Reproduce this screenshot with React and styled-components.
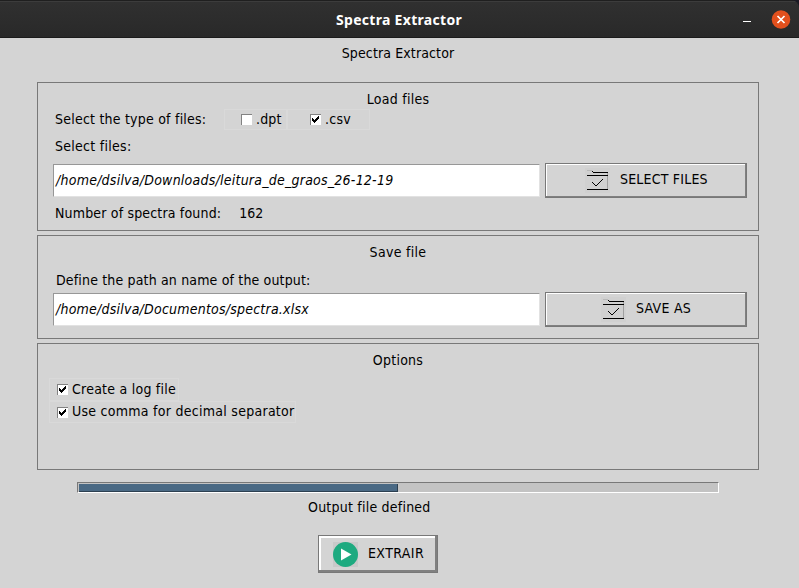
import React from "react";
import styled, { createGlobalStyle, css } from "styled-components";

const Global = createGlobalStyle`
  * { box-sizing: border-box; }
  body { margin: 0; background: #d4d4d4; }
`;
const Window = styled.div`
  width: 799px;
  height: 588px;
  overflow: hidden;
  background: #d4d4d4;
  color: #000;
  font: 14px/20px "DejaVu Sans Condensed", "DejaVu Sans", sans-serif;
  display: flex;
  flex-direction: column;
`;
const TitleBar = styled.header`
  height: 38px;
  flex: none;
  display: grid;
  grid-template-columns: 96px 1fr 96px;
  align-items: center;
  padding-top: 1px;
  background: linear-gradient(#1f1f1f 0 1px, #3c3c3c 1px 2px, #303030 2px, #292929 37px, #1b1b1b 37px);
  border-top-right-radius: 8px;
`;
const TitleCorner = styled.div`
  background: #1a1a24;
`;
const Title = styled.h1`
  grid-column: 2;
  margin: 0;
  padding-right: 1px;
  text-align: center;
  color: #fff;
  font: bold 14px/20px "Noto Sans", sans-serif;
`;
const WindowButtons = styled.div`
  display: flex;
  justify-content: flex-end;
  align-items: center;
  padding-right: 8px;
  gap: 20px;
`;
const Minimize = styled.i`
  width: 8px;
  height: 1px;
  background: #fff;
  margin-top: 4px;
`;
const Heading = styled.div`
  width: 722px;
  margin-left: 37px;
  padding-top: 5px;
  height: 44px;
  flex: none;
  text-align: center;
`;
const Panel = styled.section`
  width: 722px;
  height: ${(p) => p.$h}px;
  flex: none;
  margin: 0 0 ${(p) => p.$gap}px 37px;
  border: 1px solid #787878;
  padding: 6px 11px 0 15px;
`;
const PanelTitle = styled.h2`
  margin: 0 0 0 -4px;
  font: inherit;
  text-align: center;
`;
const Line = styled.div`
  display: flex;
  align-items: center;
  height: ${(p) => p.$h}px;
  padding-left: ${(p) => p.$indent || 0}px;
  gap: ${(p) => p.$gap || 0}px;
`;
const Text = styled.span`
  white-space: pre;
  letter-spacing: ${(p) => p.$track || 0}px;
`;
const RaisedText = styled(Text)`
  margin-bottom: 2px;
`;
const TypeLabel = styled(RaisedText)`
  width: 169px;
`;
const Check = styled.label`
  display: flex;
  align-items: center;
  gap: 4px;
  width: ${(p) => p.$w}px;
  height: ${(p) => p.$h}px;
  padding-left: ${(p) => p.$pad}px;
  border: 1px solid #d9d9d9;
`;
const Tick = styled.span`
  width: 11px;
  height: 11px;
  background: #fff;
  border: solid #828282;
  border-width: 1px 0 0 1px;
  display: flex;
`;
const Options = styled.div`
  margin: 8px 0 0 -4px;
`;
const FieldRow = styled.div`
  display: flex;
  align-items: center;
  gap: 5px;
  margin-top: ${(p) => p.$top}px;
`;
const Field = styled.div`
  width: 487px;
  height: 33px;
  padding: 5px 0 0 2px;
  background: #fff;
  border: 1px solid;
  border-color: #979797 #e2e2e2 #e2e2e2 #979797;
  font-style: italic;
`;
const raised = css`
  border: 1px solid #787878;
  box-shadow: inset -${(p) => p.$bevel}px -${(p) => p.$bevel}px #808080,
    inset ${(p) => p.$bevel}px ${(p) => p.$bevel}px #fff;
`;
const Button = styled.button`
  ${raised}
  width: ${(p) => p.$w}px;
  height: ${(p) => p.$h}px;
  padding: 0 0 0 ${(p) => p.$pad}px;
  display: flex;
  align-items: center;
  gap: 10px;
  background: #d4d4d4;
  color: #000;
  font: inherit;
`;
const ButtonText = styled(Text)`
  margin-bottom: ${(p) => p.$lift}px;
`;
const Track = styled.div`
  width: 642px;
  height: 11px;
  flex: none;
  margin: 12px 0 0 77px;
  background: #c3c3c3;
  border: 1px solid;
  border-color: #787878 #fff #fff #787878;
  padding: 1px 0 0 1px;
  display: flex;
`;
const Bar = styled.div`
  background: #4a6984;
  border: solid #2c3f50;
  border-width: 0 1px 1px 0;
`;
const Footer = styled.footer`
  display: flex;
  flex-direction: column;
  padding: 4px 0 0 308px;
`;
const ActionRow = styled.div`
  padding: 18px 0 0 10px;
`;

function CheckBox({ checked, label, track, ...size }) {
  return (
    <Check {...size}>
      <Tick>
        {checked && (
          <svg width="10" height="10" viewBox="0 0 10 10" shapeRendering="crispEdges">
            <path d="M1 3h1v1h1v1h1v-1h1v-1h1v-1h1v-1h1v3h-1v1h-1v1h-1v1h-1v1h-1v-1h-1v-1h-1z" />
          </svg>
        )}
      </Tick>
      <RaisedText $track={track}>{label}</RaisedText>
    </Check>
  );
}

function FolderIcon() {
  return (
    <svg width="25" height="25" viewBox="0 0 25 25" shapeRendering="crispEdges">
      <path fill="#d0d0d0" d="M0 0h25v25H0z" />
      <path fill="#b8b8b8" d="M2 2h5v1H2z" />
      <path fill="#a0a0a0" d="M22 5h1v16h-1z" />
      <path d="M7 3h1v1h15v1H8v-1H7zM2 7h21v1H2zM2 21h21v1H2z" />
      <path d="M7 14h1v1H7zM8 15h1v1H8zM9 16h1v1H9zM10 17h2v1h-2zM12 16h1v1h-1zM13 15h1v1h-1zM14 14h1v1h-1zM15 13h1v1h-1zM16 12h1v1h-1zM17 11h1v1h-1z" />
    </svg>
  );
}

function PlayIcon() {
  return (
    <svg width="25" height="25" viewBox="0 0 25 25">
      <path fill="#c9c9c9" d="M0 0h25v25H0z" />
      <circle cx="12.5" cy="12.5" r="12.5" fill="#1eaa80" />
      <path fill="#fff" d="M8 6.5v12l10.5-6z" />
    </svg>
  );
}

export default function App() {
  return (
    <Window>
      <Global />
      <TitleCorner>
        <TitleBar>
          <Title><Text $track={0.3}>Spectra Extractor</Text></Title>
          <WindowButtons>
            <Minimize />
            <svg width="20" height="20" viewBox="0 0 20 20">
              <circle cx="10" cy="9.5" r="9.3" fill="#e2501d" />
              <path d="M6.5 6l7 7m0-7l-7 7" stroke="#fff" strokeWidth="1.7" />
            </svg>
          </WindowButtons>
        </TitleBar>
      </TitleCorner>
      <Heading><Text $track={0.12}>Spectra Extractor</Text></Heading>

      <Panel $h={149} $gap={4}>
        <PanelTitle><Text $track={0.27}>Load files</Text></PanelTitle>
        <Line $h={21} $indent={2}>
          <TypeLabel $track={0.22}>Select the type of files:</TypeLabel>
          <CheckBox label=".dpt" track={0.15} $w={63} $h={21} $pad={16} />
          <CheckBox checked label=".csv" track={0.25} $w={83} $h={21} $pad={22} />
        </Line>
        <Line $h={33} $indent={2}><RaisedText $track={0.28}>Select files:</RaisedText></Line>
        <FieldRow $top={0}>
          <Field><Text $track={0.235}>/home/dsilva/Downloads/leitura_de_graos_26-12-19</Text></Field>
          <Button $w={202} $h={35} $bevel={1} $pad={39}>
            <FolderIcon />
            <ButtonText $track={0.2} $lift={3}>SELECT FILES</ButtonText>
          </Button>
        </FieldRow>
        <Line $h={30} $indent={2} $gap={18}>
          <Text $track={0.17}>Number of spectra found:</Text>
          <Text>162</Text>
        </Line>
      </Panel>

      <Panel $h={104} $gap={4}>
        <PanelTitle><Text $track={0.3}>Save file</Text></PanelTitle>
        <Line $h={36} $indent={3}><Text $track={0.16}>Define the path an name of the output:</Text></Line>
        <FieldRow $top={-6}>
          <Field><Text $track={0.22}>/home/dsilva/Documentos/spectra.xlsx</Text></Field>
          <Button $w={202} $h={35} $bevel={1} $pad={55}>
            <FolderIcon />
            <ButtonText $track={0.28} $lift={3}>SAVE AS</ButtonText>
          </Button>
        </FieldRow>
      </Panel>

      <Panel $h={127} $gap={0}>
        <PanelTitle><Text $track={0.25}>Options</Text></PanelTitle>
        <Options>
          <CheckBox checked label="Create a log file" track={0.24} $w={130} $h={23} $pad={7} />
          <CheckBox checked label="Use comma for decimal separator" track={0.27} $w={247} $h={22} $pad={7} />
        </Options>
      </Panel>

      <Track><Bar style={{ width: 319 }} /></Track>
      <Footer>
        <Text $track={0.22}>Output file defined</Text>
        <ActionRow>
          <Button $w={120} $h={38} $bevel={2} $pad={14}>
            <PlayIcon />
            <ButtonText $track={0.4} $lift={2}>EXTRAIR</ButtonText>
          </Button>
        </ActionRow>
      </Footer>
    </Window>
  );
}
